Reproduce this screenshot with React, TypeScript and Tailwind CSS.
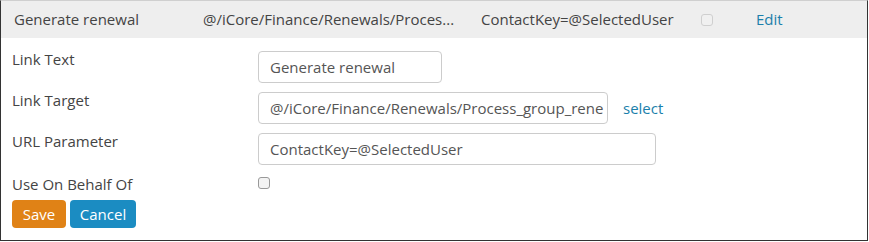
export default function App() {
  return (
    <div
      className="w-[868px] h-[241px] border border-[#333] border-t-[#cfcfcf] bg-white text-[15px] text-[#444] overflow-hidden"
      style={{ fontFamily: "'Open Sans', Lato, sans-serif" }}
    >
      <div className="flex items-center h-[37px] bg-[#eeeeee] whitespace-nowrap">
        <div className="w-[202px] pl-[13px]">Generate renewal</div>
        <div className="w-[278px]">@/iCore/Finance/Renewals/Proces...</div>
        <div className="w-[220px]">ContactKey=@SelectedUser</div>
        <div className="w-[55px]">
          <span className="block w-[12px] h-[12px] rounded-[3px] border border-[#cfcfcf] bg-[#f0f0f0]" />
        </div>
        <a className="text-[#1b7fab]">Edit</a>
      </div>

      <div className="pl-[11px] pt-[13px]">
        <div className="flex h-[41px]">
          <label className="w-[246px] leading-[20px] -mt-[2px]">Link Text</label>
          <div className="w-[184px] h-[32px] rounded-[4px] border border-[#cccccc] px-[11px] flex items-center text-[#555] whitespace-nowrap">
            Generate renewal
          </div>
        </div>
        <div className="flex h-[41px]">
          <label className="w-[246px] leading-[20px] -mt-[2px]">Link Target</label>
          <div className="w-[350px] h-[32px] rounded-[4px] border border-[#cccccc] pl-[11px] flex items-center text-[#555] overflow-hidden whitespace-nowrap">
            @/iCore/Finance/Renewals/Process_group_rene
          </div>
          <a className="ml-[15px] h-[32px] flex items-center text-[#1b7fab]">select</a>
        </div>
        <div className="flex h-[41px]">
          <label className="w-[246px] leading-[20px] -mt-[2px]">URL Parameter</label>
          <div className="w-[398px] h-[32px] rounded-[4px] border border-[#cccccc] px-[11px] flex items-center text-[#555]">
            ContactKey=@SelectedUser
          </div>
        </div>
        <div className="flex h-[25px]">
          <label className="w-[246px] leading-[20px]">Use On Behalf Of</label>
          <span className="mt-[3px] block w-[12px] h-[12px] rounded-[3px] border border-[#999] bg-[#f3f3f3]" />
        </div>
        <div className="flex gap-[4px] mt-[1px]">
          <button className="w-[54px] h-[28px] rounded-[4px] bg-[#e08216] text-white">Save</button>
          <button className="w-[66px] h-[28px] rounded-[4px] bg-[#1b8cc2] text-white">Cancel</button>
        </div>
      </div>
    </div>
  );
}
